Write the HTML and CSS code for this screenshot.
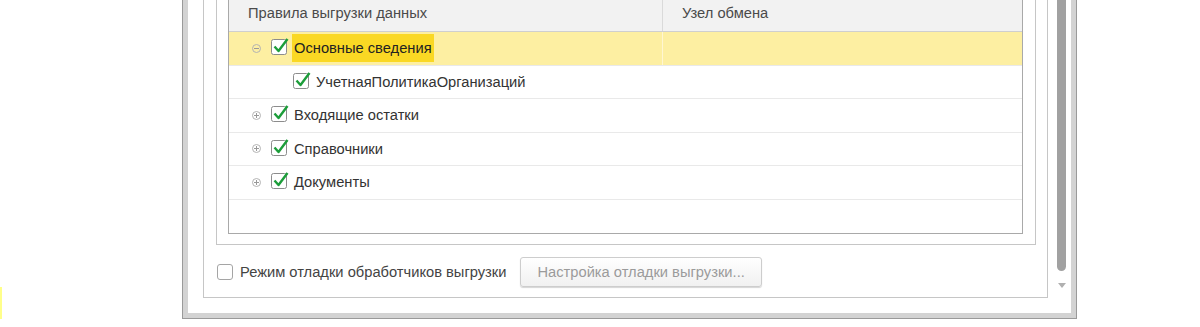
FILE: index.html
```html
<!DOCTYPE html>
<html lang="ru">
<head>
    <meta charset="UTF-8">
    <meta name="viewport" content="width=device-width, initial-scale=1.0">
    <title>Выгрузка данных</title>
    <link rel="stylesheet" href="styles.css">
</head>
<body>
    <div class="marker"></div>

    <div class="window">
        <div class="window-body">
            <div class="group">
                <div class="panel">
                    <div class="tree">
                        <div class="tree-head">
                            <div class="col col-name">Правила выгрузки данных</div>
                            <div class="col col-node">Узел обмена</div>
                        </div>

                        <div class="tree-row selected">
                            <div class="col col-name">
                                <span class="toggle minus"></span>
                                <svg class="check" viewBox="0 0 19 19"><rect x="0.5" y="2.5" width="15" height="15" rx="2"/><path d="M3.5 9.5 L7.5 14 L16.5 2"/></svg>
                                <span class="label">Основные сведения</span>
                            </div>
                            <div class="col col-node"></div>
                        </div>

                        <div class="tree-row level-1">
                            <div class="col col-name">
                                <span class="toggle"></span>
                                <svg class="check" viewBox="0 0 19 19"><rect x="0.5" y="2.5" width="15" height="15" rx="2"/><path d="M3.5 9.5 L7.5 14 L16.5 2"/></svg>
                                <span class="label">УчетнаяПолитикаОрганизаций</span>
                            </div>
                            <div class="col col-node"></div>
                        </div>

                        <div class="tree-row">
                            <div class="col col-name">
                                <span class="toggle plus"></span>
                                <svg class="check" viewBox="0 0 19 19"><rect x="0.5" y="2.5" width="15" height="15" rx="2"/><path d="M3.5 9.5 L7.5 14 L16.5 2"/></svg>
                                <span class="label">Входящие остатки</span>
                            </div>
                            <div class="col col-node"></div>
                        </div>

                        <div class="tree-row">
                            <div class="col col-name">
                                <span class="toggle plus"></span>
                                <svg class="check" viewBox="0 0 19 19"><rect x="0.5" y="2.5" width="15" height="15" rx="2"/><path d="M3.5 9.5 L7.5 14 L16.5 2"/></svg>
                                <span class="label">Справочники</span>
                            </div>
                            <div class="col col-node"></div>
                        </div>

                        <div class="tree-row">
                            <div class="col col-name">
                                <span class="toggle plus"></span>
                                <svg class="check" viewBox="0 0 19 19"><rect x="0.5" y="2.5" width="15" height="15" rx="2"/><path d="M3.5 9.5 L7.5 14 L16.5 2"/></svg>
                                <span class="label">Документы</span>
                            </div>
                            <div class="col col-node"></div>
                        </div>
                    </div>
                </div>

                <div class="bottom-bar">
                    <label class="debug-option">
                        <span class="box"></span>
                        Режим отладки обработчиков выгрузки
                    </label>
                    <button class="btn" disabled>Настройка отладки выгрузки...</button>
                </div>
            </div>

            <div class="scrollbar">
                <div class="thumb"></div>
                <div class="arrow"></div>
            </div>
        </div>
    </div>
</body>
</html>
```

FILE: styles.css
```css
* {
    margin: 0;
    padding: 0;
    box-sizing: border-box;
}

body {
    background: #fff;
    color: #333;
    font-family: "Liberation Sans", Arial, sans-serif;
    font-size: 14.7px;
    position: relative;
}

/* bit of yellow at the left edge of the capture */
.marker {
    position: absolute;
    left: 0;
    top: 287px;
    width: 2px;
    height: 38px;
    background: #ffff8a;
}

.window {
    margin-left: 182px;
    width: 895px;
    background: #d3d3d3;
    border: 1px solid #9a9a9a;
    border-top: none;
    padding: 0 5px 5px 5px;
}

.window-body {
    display: flex;
    background: #fff;
    padding: 0 0 15px 15px;
}

.group {
    width: 845px;
    border: 1px solid #c6c6c6;
    border-top: none;
    padding: 0 11px 10px 12px;
}

.panel {
    border: 1px solid #c6c6c6;
    border-top: none;
    padding: 0 12px 10px 11px;
}

.tree {
    height: 234px;
    border: 1px solid #a9a9a9;
    border-top: none;
}

.tree-head,
.tree-row {
    display: flex;
}

.tree-head {
    height: 32px;
    background: #f2f2f2;
    border-bottom: 1px solid #cfcfcf;
    color: #4a4a4a;
}

.tree-head .col {
    line-height: 27px;
}

.col-name {
    width: 434px;
    border-right: 1px solid #dadada;
    padding-left: 19px;
}

.col-node {
    flex: 1;
    padding-left: 19px;
}

.tree-row {
    height: 33.5px;
    border-bottom: 1px solid #e9e9e9;
}

.tree-row .col-name {
    display: flex;
    align-items: center;
    padding-left: 23px;
    border-right-color: transparent;
}

.tree-row.level-1 .col-name {
    padding-left: 45px;
}

.tree-row.selected {
    background: #fdefa2;
}

.tree-row.selected .col-name {
    border-right-color: #fff6d2;
}

.toggle {
    width: 9px;
    height: 9px;
    margin-right: 10px;
    position: relative;
    flex-shrink: 0;
}

.toggle.plus,
.toggle.minus {
    border: 1px solid #b3b3b3;
    border-radius: 50%;
}

.toggle.plus::before,
.toggle.minus::before {
    content: "";
    position: absolute;
    left: 1px;
    top: 3px;
    width: 5px;
    height: 1px;
    background: #999;
}

.toggle.plus::after {
    content: "";
    position: absolute;
    left: 3px;
    top: 1px;
    width: 1px;
    height: 5px;
    background: #999;
}

.check {
    width: 19px;
    height: 19px;
    margin-top: -3px;
    flex-shrink: 0;
}

.check rect {
    fill: #fff;
    stroke: #8c8c8c;
    stroke-width: 1;
}

.check path {
    fill: none;
    stroke: #1c9d3a;
    stroke-width: 2.4;
    stroke-linejoin: round;
}

.label {
    margin-left: 2px;
    padding: 0 2px;
    line-height: 28px;
}

.selected .label {
    background: #fad824;
    color: #222;
}

.bottom-bar {
    display: flex;
    align-items: center;
    margin-top: 12px;
    height: 30px;
}

.debug-option {
    display: flex;
    align-items: center;
    color: #444;
    margin-left: 1px;
}

.box {
    width: 16px;
    height: 16px;
    border: 1px solid #a5a5a5;
    border-radius: 3px;
    margin-right: 7px;
    background: #fff;
}

.btn {
    margin-left: 14px;
    width: 242px;
    height: 30px;
    font-family: inherit;
    font-size: 14.7px;
    color: #9b9b9b;
    text-align: left;
    padding-left: 16px;
    background: linear-gradient(#fff, #f1f1f1);
    border: 1px solid #cdcdcd;
    border-radius: 3px;
    box-shadow: 0 1px 1px #d5d5d5;
}

.scrollbar {
    width: 23px;
    padding-left: 9px;
}

.thumb {
    width: 9px;
    height: 271px;
    background: #a1a1a1;
    border-radius: 0 0 5px 5px;
}

.arrow {
    margin: 12px 0 0 1px;
    width: 0;
    height: 0;
    border-left: 4px solid transparent;
    border-right: 4px solid transparent;
    border-top: 5px solid #b0b0b0;
}
```
